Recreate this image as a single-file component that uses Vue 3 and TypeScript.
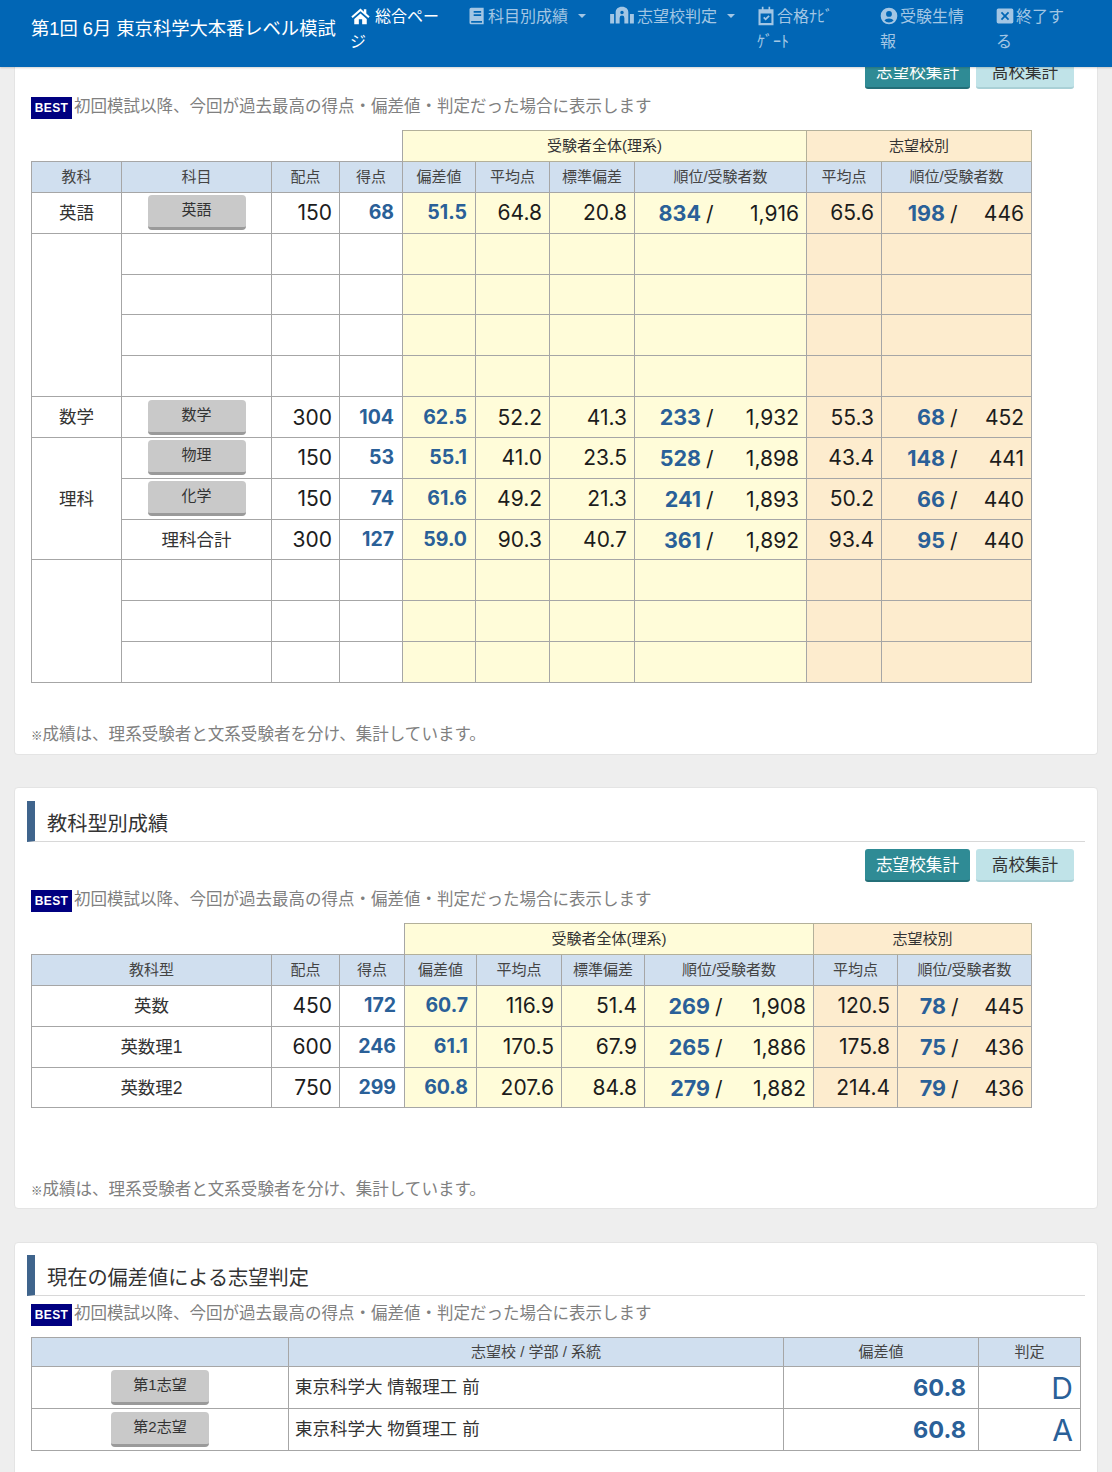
<script setup lang="ts">
interface Row {
  group?: string
  span?: number
  btn?: boolean
  name?: string
  v?: string[]
}
const note = '初回模試以降、今回が過去最高の得点・偏差値・判定だった場合に表示します'
const rows: Row[] = [
  { group: '英語', span: 1, btn: true, name: '英語', v: ['150', '68', '51.5', '64.8', '20.8', '834', '1,916', '65.6', '198', '446'] },
  { group: '', span: 4 }, {}, {}, {},
  { group: '数学', span: 1, btn: true, name: '数学', v: ['300', '104', '62.5', '52.2', '41.3', '233', '1,932', '55.3', '68', '452'] },
  { group: '理科', span: 3, btn: true, name: '物理', v: ['150', '53', '55.1', '41.0', '23.5', '528', '1,898', '43.4', '148', '441'] },
  { btn: true, name: '化学', v: ['150', '74', '61.6', '49.2', '21.3', '241', '1,893', '50.2', '66', '440'] },
  { name: '理科合計', v: ['300', '127', '59.0', '90.3', '40.7', '361', '1,892', '93.4', '95', '440'] },
  { group: '', span: 3 }, {}, {},
]
const typeRows = [
  ['英数', '450', '172', '60.7', '116.9', '51.4', '269', '1,908', '120.5', '78', '445'],
  ['英数理1', '600', '246', '61.1', '170.5', '67.9', '265', '1,886', '175.8', '75', '436'],
  ['英数理2', '750', '299', '60.8', '207.6', '84.8', '279', '1,882', '214.4', '79', '436'],
]
const colsA = [90, 150, 68, 63, 73, 74, 85, 172, 75, 150]
const colsB = [240, 68, 65, 72, 85, 83, 169, 84, 134]
</script>

<template>
  <div class="page">
    <header class="topbar">
      <div class="brand">第1回 6月 東京科学大本番レベル模試</div>
      <nav class="nav">
        <a class="item active w1">
          <svg class="ic home" viewBox="0 0 24 24"><path d="M12 3 1 12.500l1.600 1.800L12 6.200l9.400 8.100 1.600-1.800-4-3.400V4h-3v2.800zM4.500 15.500V22h5.500v-6h4v6h5.500v-6.500L12 9z" fill="currentColor"/></svg>総合ページ
        </a>
        <a class="item w2">
          <svg class="ic" viewBox="0 0 24 24"><path d="M5 2h15v20H5a2 2 0 0 1-2-2V4a2 2 0 0 1 2-2zm3 4v2h9V6zm0 4v2h9v-2zM5 18v2h13v-2z" fill="currentColor" fill-rule="evenodd"/></svg>科目別成績<span class="caret"></span>
        </a>
        <a class="item w3">
          <svg class="ic wide" viewBox="0 0 30 24"><path d="M0 10h5v12H0zm25 0h5v12h-5zM15 1c5 0 8 3 8 7v14h-5v-7a3 3 0 0 0-6 0v7H7V8c0-4 3-7 8-7zm0 5a2.200 2.200 0 1 0 0 4.400A2.200 2.200 0 0 0 15 6z" fill="currentColor" fill-rule="evenodd"/></svg>志望校判定<span class="caret"></span>
        </a>
        <a class="item w4">
          <svg class="ic" viewBox="0 0 24 24"><path d="M7 1h2v3h6V1h2v3h4v19H3V4h4zM5.500 9v11.500h13V9zm3 5.500 1.500-1.500 1.500 1.500 3.500-3.500 1.500 1.500-5 5z" fill="currentColor" fill-rule="evenodd"/></svg>合格ﾅﾋﾞ<br>ｹﾞｰﾄ
        </a>
        <a class="item w5">
          <svg class="ic" viewBox="0 0 24 24"><path d="M12 2a10 10 0 1 1 0 20 10 10 0 0 1 0-20zm0 4a3.500 3.500 0 1 0 0 7 3.500 3.500 0 0 0 0-7zm0 9c-2.500 0-4.500 1-5.500 2.500a7.500 7.500 0 0 0 11 0C16.500 16 14.500 15 12 15z" fill="currentColor" fill-rule="evenodd"/></svg>受験生情報
        </a>
        <a class="item w6">
          <svg class="ic" viewBox="0 0 24 24"><path d="M4 3h16a2 2 0 0 1 2 2v14a2 2 0 0 1-2 2H4a2 2 0 0 1-2-2V5a2 2 0 0 1 2-2zm4.500 4L7 8.500l3.500 3.500L7 15.500 8.500 17l3.500-3.500 3.500 3.500 1.500-1.500-3.500-3.500L17 8.500 15.500 7 12 10.500z" fill="currentColor" fill-rule="evenodd"/></svg>終了する
        </a>
      </nav>
    </header>

    <section class="card first">
      <div class="tools">
        <button class="tool on">志望校集計</button>
        <button class="tool">高校集計</button>
      </div>
      <p class="best"><span class="badge">BEST</span><span class="best-text">{{ note }}</span></p>
      <table class="grid ta">
        <colgroup><col v-for="(w, i) in colsA" :key="i" :style="{ width: w + 'px' }" /></colgroup>
        <thead>
          <tr>
            <th colspan="4" class="blank"></th>
            <th colspan="4" class="y gh">受験者全体(理系)</th>
            <th colspan="2" class="o gh">志望校別</th>
          </tr>
          <tr>
            <th>教科</th><th>科目</th><th>配点</th><th>得点</th><th>偏差値</th><th>平均点</th><th>標準偏差</th><th>順位/受験者数</th><th>平均点</th><th>順位/受験者数</th>
          </tr>
        </thead>
        <tbody>
          <tr v-for="(r, i) in rows" :key="i">
            <td v-if="r.span" :rowspan="r.span" class="c label">{{ r.group }}</td>
            <td v-if="r.btn" class="c"><span class="sub">{{ r.name }}</span></td>
            <td v-else class="c label">{{ r.name }}</td>
            <td class="n">{{ r.v?.[0] }}</td>
            <td class="n b">{{ r.v?.[1] }}</td>
            <td class="n b y">{{ r.v?.[2] }}</td>
            <td class="n y">{{ r.v?.[3] }}</td>
            <td class="n y">{{ r.v?.[4] }}</td>
            <td class="y rankcell">
              <div v-if="r.v" class="rank wa"><strong>{{ r.v[5] }}</strong><i>/</i><span>{{ r.v[6] }}</span></div>
            </td>
            <td class="n o">{{ r.v?.[7] }}</td>
            <td class="o rankcell">
              <div v-if="r.v" class="rank wb"><strong>{{ r.v[8] }}</strong><i>/</i><span>{{ r.v[9] }}</span></div>
            </td>
          </tr>
        </tbody>
      </table>
      <p class="foot fa"><small>※</small>成績は、理系受験者と文系受験者を分け、集計しています。</p>
    </section>

    <section class="card second">
      <h2 class="title">教科型別成績</h2>
      <div class="tools">
        <button class="tool on">志望校集計</button>
        <button class="tool">高校集計</button>
      </div>
      <p class="best"><span class="badge">BEST</span><span class="best-text">{{ note }}</span></p>
      <table class="grid tb">
        <colgroup><col v-for="(w, i) in colsB" :key="i" :style="{ width: w + 'px' }" /></colgroup>
        <thead>
          <tr>
            <th colspan="3" class="blank"></th>
            <th colspan="4" class="y gh">受験者全体(理系)</th>
            <th colspan="2" class="o gh">志望校別</th>
          </tr>
          <tr>
            <th>教科型</th><th>配点</th><th>得点</th><th>偏差値</th><th>平均点</th><th>標準偏差</th><th>順位/受験者数</th><th>平均点</th><th>順位/受験者数</th>
          </tr>
        </thead>
        <tbody>
          <tr v-for="r in typeRows" :key="r[0]">
            <td class="c label">{{ r[0] }}</td>
            <td class="n">{{ r[1] }}</td>
            <td class="n b">{{ r[2] }}</td>
            <td class="n b y">{{ r[3] }}</td>
            <td class="n y">{{ r[4] }}</td>
            <td class="n y">{{ r[5] }}</td>
            <td class="y rankcell"><div class="rank wc"><strong>{{ r[6] }}</strong><i>/</i><span>{{ r[7] }}</span></div></td>
            <td class="n o">{{ r[8] }}</td>
            <td class="o rankcell"><div class="rank wd"><strong>{{ r[9] }}</strong><i>/</i><span>{{ r[10] }}</span></div></td>
          </tr>
        </tbody>
      </table>
      <p class="foot fb"><small>※</small>成績は、理系受験者と文系受験者を分け、集計しています。</p>
    </section>

    <section class="card third">
      <h2 class="title">現在の偏差値による志望判定</h2>
      <p class="best tight"><span class="badge">BEST</span><span class="best-text">{{ note }}</span></p>
      <table class="grid tc">
        <colgroup><col style="width:257px" /><col style="width:495px" /><col style="width:195px" /><col style="width:102px" /></colgroup>
        <thead>
          <tr><th></th><th>志望校 / 学部 / 系統</th><th>偏差値</th><th>判定</th></tr>
        </thead>
        <tbody>
          <tr>
            <td class="c"><span class="sub">第1志望</span></td>
            <td class="school">東京科学大 情報理工 前</td>
            <td class="n big">60.8</td>
            <td class="n grade">D</td>
          </tr>
          <tr>
            <td class="c"><span class="sub">第2志望</span></td>
            <td class="school">東京科学大 物質理工 前</td>
            <td class="n big">60.8</td>
            <td class="n grade">A</td>
          </tr>
        </tbody>
      </table>
    </section>
  </div>
</template>

<style>
html, body { margin: 0; background: #eeeeee; }
</style>

<style scoped>
.page {
  position: relative;
  width: 1112px;
  height: 1472px;
  overflow: hidden;
  background: #eeeeee;
  font-family: "Liberation Sans", "Noto Sans CJK JP", sans-serif;
  color: #333;
}
.topbar {
  position: absolute;
  top: 0;
  left: 0;
  right: 0;
  height: 67px;
  z-index: 5;
  background: #0166b5;
  box-shadow: 0 1px 2px rgba(0, 0, 0, 0.18);
  display: flex;
  color: #fff;
}
.brand {
  margin: 16px 0 0 31px;
  width: 319px;
  font-size: 18.300px;
  line-height: 26px;
  white-space: nowrap;
}
.nav { display: flex; padding-top: 4px; }
.item {
  display: block;
  font-size: 16px;
  line-height: 25px;
  color: #a3c6e4;
}
.item.active { color: #fff; }
.w1 { width: 118px; padding-right: 22px; box-sizing: border-box; }
.w2 { width: 142px; white-space: nowrap; }
.w3 { width: 147px; white-space: nowrap; }
.w4 { width: 123px; white-space: nowrap; }
.w5 { width: 116px; padding-right: 24px; box-sizing: border-box; }
.w6 { width: 80px; padding-right: 4px; box-sizing: border-box; }
.ic { width: 20px; height: 20px; vertical-align: -4px; margin: 0 1px 0 -1px; }
.ic.home { width: 21px; height: 20px; margin: 0 4px 0 0; }
.ic.wide { width: 24px; height: 19px; margin: 0 3px 0 0; vertical-align: -3px; }
.caret {
  display: inline-block;
  margin-left: 10px;
  vertical-align: 4px;
  border-left: 4.500px solid transparent;
  border-right: 4.500px solid transparent;
  border-top: 4.500px solid currentColor;
}
.card {
  margin: 0 14px;
  background: #fff;
  border: 1px solid #e4e4e4;
  border-radius: 4px;
  padding: 0 16px;
  box-sizing: border-box;
}
.first { height: 755px; border-top: 0; padding-top: 56px; }
.second { margin-top: 32px; height: 422px; padding-top: 13px; }
.third { margin-top: 33px; height: 300px; padding-top: 12px; }
.title {
  margin: 0 -4px;
  height: 41px;
  box-sizing: border-box;
  border-left: 8px solid #3f648c;
  border-bottom: 1px solid #d8d8d8;
  padding: 9px 0 0 12px;
  font-size: 20.200px;
  line-height: 28px;
  font-weight: 400;
  color: #333;
}
.tools {
  display: flex;
  justify-content: flex-end;
  gap: 6px;
  padding-right: 7px;
}
.second .tools { margin-top: 7px; }
.tool {
  height: 33px;
  padding: 0 0 2px;
  width: 98px;
  border: 0;
  border-bottom: 2px solid #a9d0d6;
  border-radius: 3px;
  background: #c0e3e8;
  color: #333;
  font: inherit;
  font-size: 16.600px;
}
.tool.on {
  width: 105px;
  background: #2f8b95;
  border-bottom-color: #246f78;
  color: #fff;
}
.best {
  margin: 8px 0 11px;
  height: 22px;
  display: flex;
  align-items: center;
  font-size: 16.500px;
  color: #808080;
  white-space: nowrap;
}
.best-text { position: relative; top: -3px; }
.badge {
  width: 41px;
  height: 22px;
  margin-right: 2px;
  background: #000080;
  color: #fff;
  font-size: 12px;
  font-weight: 700;
  line-height: 23px;
  text-align: center;
  letter-spacing: 0.4px;
}
.grid {
  border-collapse: collapse;
  table-layout: fixed;
}
.ta { width: 1000px; }
.tb { width: 1000px; }
.tc { width: 1049px; }
.grid th,
.grid td {
  border: 1.500px solid #a6a6a6;
  padding: 0;
  box-sizing: border-box;
}
.grid th {
  height: 31px;
  padding-bottom: 4px;
  background: #d0dfef;
  font-size: 15px;
  font-weight: 400;
  color: #444;
  white-space: nowrap;
}
.grid td { height: 40.830px; background: #fff; }
.grid th.blank { background: #fff; border-top: 0; border-left: 0; border-right-color: #a6a6a6; }
.grid th.gh { color: #333; border-color: #b3b09a; }
.grid .y { background: #fffcd9; }
.grid .o { background: #fdecce; }
.c { text-align: center; }
.label { font-size: 17.500px; color: #333; padding-bottom: 3px !important; }
.n {
  text-align: right;
  padding-right: 7px !important;
  font-family: Inter, "Liberation Sans", sans-serif;
  font-size: 21px;
  color: #1c1c1c;
}
.n.b {
  font-size: 19.500px;
  font-weight: 700;
  color: #2a6098;
  padding-right: 8px !important;
  padding-bottom: 1px;
}
.rankcell { padding: 0 7px 0 0 !important; }
.rank {
  display: flex;
  align-items: baseline;
  font-family: Inter, "Liberation Sans", sans-serif;
  font-size: 21px;
  color: #1c1c1c;
}
.rank strong {
  flex: none;
  text-align: right;
  font-size: 21.500px;
  color: #2a6098;
}
.rank i { font-style: normal; margin-left: 5px; }
.rank span { flex: 1; text-align: right; }
.wa strong { width: 66px; }
.wb strong { width: 63px; }
.wc strong { width: 65px; }
.wd strong { width: 48px; }
.sub {
  display: inline-block;
  box-sizing: border-box;
  width: 98px;
  height: 35px;
  line-height: 30px;
  vertical-align: middle;
  background: #c9c9c9;
  border-bottom: 3px solid #9a9a9a;
  border-radius: 4px;
  font-size: 15px;
  color: #333;
}
.foot {
  margin: 0;
  font-size: 16.550px;
  line-height: 24px;
  color: #808080;
}
.foot small { font-size: 11.500px; color: #666; }
.fa { margin-top: 40px; }
.fb { margin-top: 70px; }
.tc th { height: 29px; }
.tc td { height: 42px; }
.school { padding: 0 0 4px 6px !important; font-size: 17.500px; color: #333; }
.grid .big { font-size: 23.500px; font-weight: 700; color: #2a6098; padding-right: 12px !important; }
.grid .grade { font-size: 30px; color: #2a6098; }
</style>
